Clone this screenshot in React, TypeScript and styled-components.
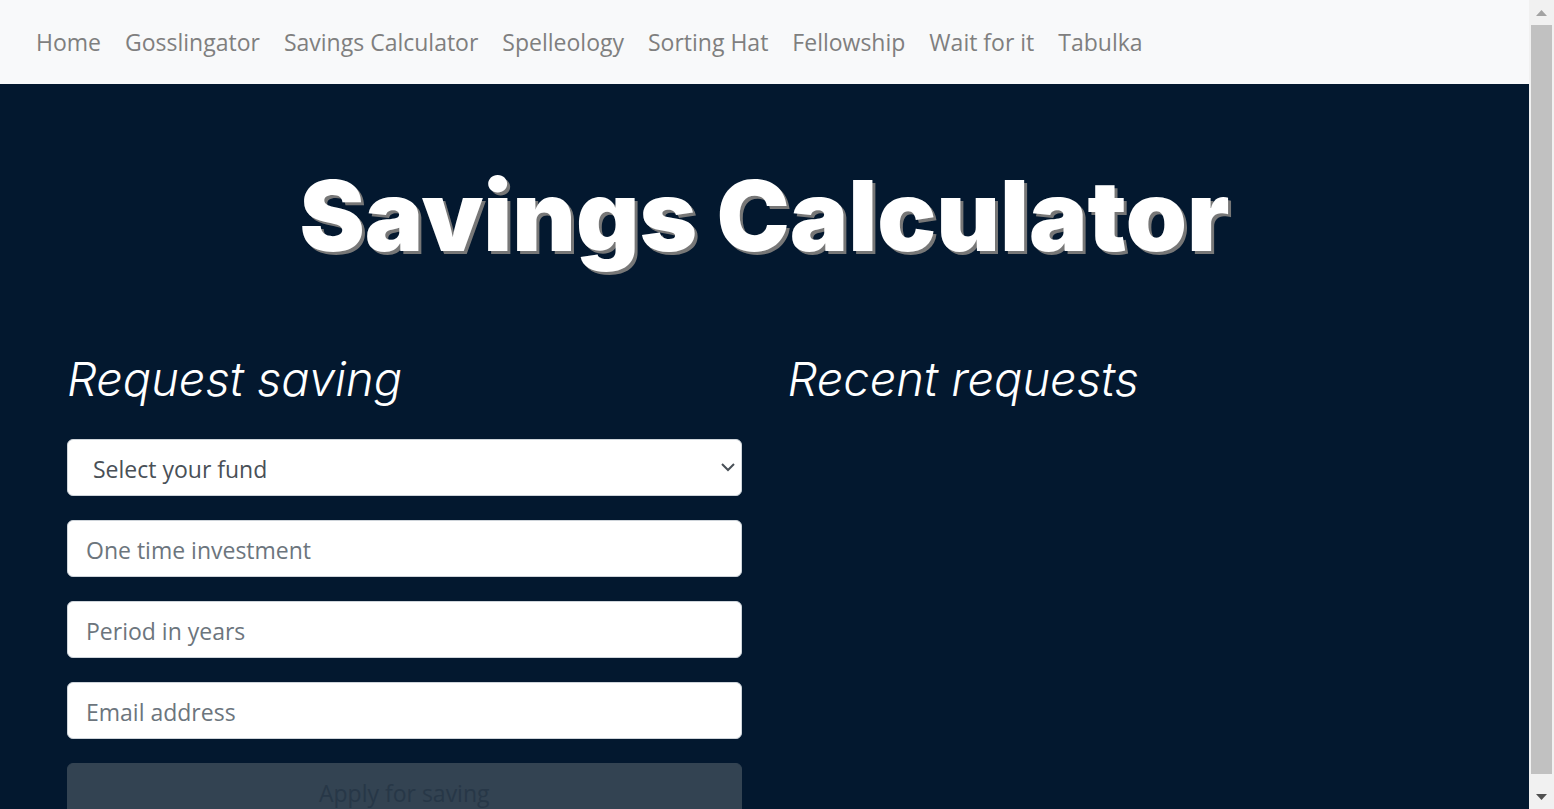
import React from "react";
import styled, { createGlobalStyle, css } from "styled-components";

const Global = createGlobalStyle`
  * { box-sizing: border-box; }
  body {
    margin: 0;
    background: #03182f;
    color: #fff;
    font-family: "Open Sans", "Noto Sans", sans-serif;
    font-size: 23px;
    line-height: 36px;
  }
`;

const Shell = styled.div`
  display: flex;
  height: 100vh;
  overflow: hidden;
`;

const Page = styled.div`
  flex: 1;
  min-width: 0;
  overflow: hidden;
`;

const Nav = styled.nav`
  display: flex;
  flex-wrap: wrap;
  padding: 12px 24px;
  background: #f8f9fa;
`;

const NavLink = styled.a`
  padding: 12px;
  color: #7f7f7f;
  text-decoration: none;
`;

const Title = styled.h1`
  margin: 72px 0;
  font-family: Inter, sans-serif;
  font-size: 98px;
  font-weight: 900;
  line-height: 120px;
  text-align: center;
  text-shadow: 3px 3px 0 #777;
`;

const Columns = styled.main`
  display: grid;
  grid-template-columns: 1fr 1fr;
  gap: 46px;
  padding: 0 67px 72px;
`;

const Heading = styled.h2`
  margin: 0 0 29px;
  font-family: Inter, sans-serif;
  font-size: 47px;
  font-style: italic;
  font-weight: 300;
  line-height: 62px;
`;

const Form = styled.form`
  display: flex;
  flex-direction: column;
  gap: 24px;
`;

const control = css`
  display: block;
  width: 100%;
  height: 57px;
  border: 1px solid #ced4da;
  border-radius: 6px;
  background: #fff;
  font: inherit;
`;

const Field = styled.input`
  ${control}
  padding: 2px 18px 0;
  color: #495057;
  &::placeholder { color: #6c757d; opacity: 1; }
`;

const SelectWrap = styled.div`
  position: relative;
`;

const Select = styled.select`
  ${control}
  appearance: none;
  padding: 2px 25px 0;
  color: #495057;
`;

const Chevron = styled.svg`
  position: absolute;
  right: 7px;
  top: 24px;
  pointer-events: none;
`;

const Submit = styled.button`
  ${control}
  padding: 2px 18px 0;
  border-color: #334352;
  background: #334352;
  color: #273747;
`;

const Track = styled.div`
  display: flex;
  flex-direction: column;
  width: 25px;
  padding: 0 2px;
  background: #f1f1f1;
`;

const ArrowButton = styled.button<{ $color: string }>`
  display: grid;
  place-items: center;
  height: 25px;
  padding: 0;
  border: 0;
  background: none;
  color: ${(p) => p.$color};
`;

const Thumb = styled.div`
  flex: 1;
  margin-bottom: 10px;
  background: #c1c1c1;
`;

const links = [
  "Home",
  "Gosslingator",
  "Savings Calculator",
  "Spelleology",
  "Sorting Hat",
  "Fellowship",
  "Wait for it",
  "Tabulka",
];

const fields = [
  { label: "One time investment", type: "text" },
  { label: "Period in years", type: "text" },
  { label: "Email address", type: "email" },
];

export default function App() {
  return (
    <>
      <Global />
      <Shell>
        <Page>
          <Nav>
            {links.map((l) => (
              <NavLink key={l} href="#">{l}</NavLink>
            ))}
          </Nav>
          <Title>Savings Calculator</Title>
          <Columns>
            <section>
              <Heading>Request saving</Heading>
              <Form>
                <SelectWrap>
                  <Select aria-label="Fund" defaultValue="">
                    <option value="">Select your fund</option>
                  </Select>
                  <Chevron width="14" height="9" viewBox="0 0 14 9" fill="none" stroke="#495057" strokeWidth="2">
                    <path d="M1 1l6 6 6-6" />
                  </Chevron>
                </SelectWrap>
                {fields.map((f) => (
                  <Field key={f.label} type={f.type} placeholder={f.label} aria-label={f.label} />
                ))}
                <Submit type="submit" disabled>Apply for saving</Submit>
              </Form>
            </section>
            <section>
              <Heading>Recent requests</Heading>
            </section>
          </Columns>
        </Page>
        <Track>
          <ArrowButton $color="#a3a3a3" aria-label="Scroll up">
            <svg width="11" height="6" viewBox="0 0 11 6"><path d="M0 6L5.500 0L11 6z" fill="currentColor" /></svg>
          </ArrowButton>
          <Thumb />
          <ArrowButton $color="#505050" aria-label="Scroll down">
            <svg width="11" height="6" viewBox="0 0 11 6"><path d="M0 0L5.500 6L11 0z" fill="currentColor" /></svg>
          </ArrowButton>
        </Track>
      </Shell>
    </>
  );
}
